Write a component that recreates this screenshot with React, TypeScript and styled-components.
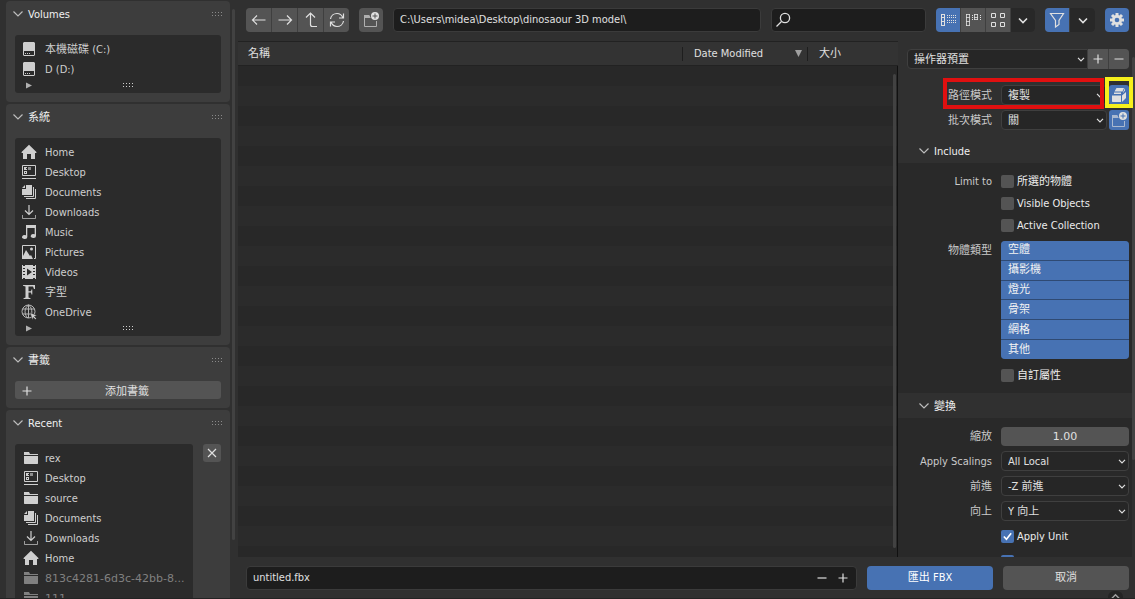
import React, { useState } from "react";
import styled, { createGlobalStyle, css } from "styled-components";

const color = {
  window: "#303030",
  panel: "#3d3d3d",
  well: "#2b2b2b",
  body: "#292929",
  field: "#1d1d1d",
  button: "#545454",
  blue: "#4772b3",
  line: "#3f3f3f",
  text: "#e0e0e0",
};

const GlobalStyle = createGlobalStyle`
  * { box-sizing: border-box; }
  html, body, #root { height: 100%; }
  body {
    margin: 0;
    overflow: hidden;
    background: ${color.window};
    color: ${color.text};
    font: 11px/20px "DejaVu Sans Condensed", "DejaVu Sans", "Noto Sans CJK TC", sans-serif;
  }
  button, input, select {
    font: inherit;
    color: inherit;
    margin: 0;
    padding: 0;
    border: 0;
    background: none;
    border-radius: 0;
    appearance: none;
    outline: none;
  }
  svg { display: block; flex: none; }
`;

/* ---------- icons ---------- */

type IconName =
  | "disk" | "home" | "desktop" | "documents" | "downloads" | "music" | "pictures"
  | "videos" | "font" | "globe" | "folder" | "left" | "right" | "up" | "refresh"
  | "newFolder" | "search" | "listV" | "listH" | "thumbs" | "chevron" | "funnel"
  | "gear" | "plus" | "minus" | "close" | "pack" | "disclose" | "play" | "check" | "raise";

const line = { fill: "none", stroke: "currentColor", strokeWidth: 1 };

const shapes: Record<IconName, React.ReactNode> = {
  disk: (
    <path fill="currentColor" fillRule="evenodd" d="M3 1h10l1 1v12l-1 1H3l-1-1V2zM3 10v4h10v-4zM4 12h1v1H4zM6 12h1v1H6zM8 12h1v1H8z" />
  ),
  home: <path fill="currentColor" d="M8 .8 15.400 8v1H14v6h-4v-5H6v5H2V9H.6V8z" />,
  desktop: (
    <>
      <path {...line} d="M1.500 1.500h13v10h-13zM1 14.500h14" />
      <path fill="currentColor" fillRule="evenodd" d="M3 3h3v3H3zM5 4v1h1V4zM3 7h3v3H3zM4 8v1h1V8z" />
      <path fill="currentColor" opacity=".6" d="M7 3h3v3H7z" />
    </>
  ),
  documents: (
    <>
      <path fill="currentColor" d="M5 1h6v10H1V5h4zM4 1v3H1z" />
      <path {...line} d="M3 12.500h9.500V3M5 14.500h9.500V5" />
    </>
  ),
  downloads: (
    <>
      <path {...line} d="M8 1v9.500M4 6.500l4 4 4-4" strokeWidth={1.2} />
      <path {...line} opacity=".7" d="M1.500 11v3.500h13V11" />
    </>
  ),
  music: (
    <path fill="currentColor" d="M5 1h10v11a2.600 2 0 1 1-1.300-1.700V4H6.300v9A2.600 2 0 1 1 5 11.300z" />
  ),
  pictures: (
    <>
      <path {...line} d="M1.500 14V1.500h13v13H13" />
      <path fill="currentColor" d="M1 15v-1l4-8 4 6 1-1 2 4z" />
      <circle cx="10.500" cy="5" r="1.500" fill="currentColor" />
    </>
  ),
  videos: (
    <path fill="currentColor" fillRule="evenodd" d="M1 1h1v1h2V1h8v1h2V1h1v14h-1v-1h-2v1H4v-1H2v1H1zM2 4v1h2V4zM2 7v1h2V7zM2 10v1h2v-1zM12 4v1h2V4zM12 7v1h2V7zM12 10v1h2v-1zM6 4.500v7L11 8z" />
  ),
  font: (
    <path fill="currentColor" d="M2 1h12v4h-1l-1-2.600H7.500v4.800H10L10.500 5.500h.8v5h-.8L10 8.500H7.500v5l2 .7v.8H2.500v-.8l2-.7v-11L2 1.800z" />
  ),
  globe: (
    <>
      <g {...line} opacity=".85">
        <circle cx="7.500" cy="7.500" r="6.500" />
        <path d="M1.500 5h12M1.500 10h9M7.500 1v13M7.500 1C3 4 3 11 7 14M7.500 1c3 2 3.500 5 3.300 8" />
      </g>
      <path fill="currentColor" stroke={color.well} strokeWidth=".5" d="m9 8.500 7 3-2.600.9 2 2-1.100 1.100-2-2-.9 2.500z" />
    </>
  ),
  folder: <path fill="currentColor" d="M1 2h5l1 2h8v1H1zM1 6h14v7.500l-.5.500h-13l-.5-.500z" />,
  left: <path {...line} strokeWidth="1.200" d="M14.500 8h-13M6 3.500 1.500 8 6 12.500" />,
  right: <path {...line} strokeWidth="1.200" d="M1.500 8h13M10 3.500 14.500 8 10 12.500" />,
  up: <path {...line} strokeWidth="1.200" d="M3 5.500 7.500 1 12 5.500M7.500 1v11.500q0 2 2 2H14" />,
  refresh: (
    <path {...line} strokeWidth="1.200" d="M1.500 7C2 3.500 5 1.500 8 1.500c3 0 5 2 6 4.500M14.500 1.500V6H10M14.500 9c-.5 3.500-3.500 5.500-6.500 5.500-3 0-5-2-6-4.500M1.500 14.500V10H6" />
  ),
  newFolder: (
    <>
      <g opacity=".65">
        <path {...line} d="M7.500 5.500h-6v9h12V9" />
        <path fill="currentColor" d="M1 3h5l1 1v2H1z" />
      </g>
      <path fill="currentColor" fillRule="evenodd" d="M12 0a4 4 0 0 1 0 8 4 4 0 0 1 0-8zM11.500 1.500v2h-2v1h2v2h1v-2h2v-1h-2v-2z" />
    </>
  ),
  search: (
    <g {...line} strokeWidth="1.300">
      <circle cx="10" cy="6" r="4.600" />
      <path d="M6.500 9.500 1.500 14.500" />
    </g>
  ),
  listV: (
    <>
      <path {...line} d="M1.500 2v12M4.500 2v12M1 2.500h4M1 5.500h4M1 9.500h4M1 13.500h4" />
      <path {...line} strokeDasharray="1 1" d="M7 3.500h9M7 5.500h9M7 8.500h9M7 10.500h9" />
    </>
  ),
  listH: (
    <>
      <path {...line} d="M1.500 2v12M4.500 2v12M1 2.500h4M1 5.500h4M1 9.500h4M1 13.500h4M9.500 2v6M12.500 2v6M9 2.500h4M9 5.500h4M9 7.500h4" opacity=".8" />
      <path {...line} strokeDasharray="1 1" d="M7.500 3v5M15.500 3v5" />
    </>
  ),
  thumbs: <path {...line} d="M1.500 1.500h4v4h-4zM10.500 1.500h4v4h-4zM1.500 10.500h4v4h-4zM10.500 10.500h4v4h-4z" />,
  chevron: <path {...line} strokeWidth="1.600" d="m4 6.500 4 4 4-4" />,
  funnel: <path {...line} strokeWidth="1.200" d="M1.500 1.500h13L10 8.500v4L6.500 15V8.500z" />,
  gear: (
    <>
      <path stroke="currentColor" strokeWidth="3" d="M8 1v14M1 8h14M3 3l10 10M13 3 3 13" />
      <circle cx="8" cy="8" r="5" fill="currentColor" />
      <circle cx="8" cy="8" r="2.300" fill={color.blue} />
    </>
  ),
  plus: <path {...line} strokeWidth="1.200" d="M8 3.500v9M3.500 8h9" />,
  minus: <path {...line} strokeWidth="1.200" d="M3.500 8h9" />,
  close: <path {...line} strokeWidth="1.200" d="m4 4 8 8M12 4l-8 8" />,
  pack: (
    <>
      <path fill="currentColor" d="M5.500 1H13l-1.500 3.500h-8zM3 5.500h7V7H3zM1 8.500h9V15H1.500L1 14.500z" />
      <path fill="currentColor" d="M11 8.500 15 5v6l-4 4zM12 5.500 14 1v2.500L12 6z" />
    </>
  ),
  disclose: <path {...line} strokeWidth="1.200" d="m3.500 5.500 4.500 4.500L12.500 5.500" />,
  play: <path fill="currentColor" d="M4 4.500 12 8.500 4 12.500z" />,
  check: <path {...line} strokeWidth="2" d="m3.500 8 3.200 3.500L12.500 4" />,
  raise: <path {...line} strokeWidth="1.500" d="m4 8 4-4 4 4" />,
};

const Icon = ({ name, size = 16 }: { name: IconName; size?: number }) => (
  <svg width={size} height={size} viewBox="0 0 16 16" aria-hidden="true">
    {shapes[name]}
  </svg>
);

/* ---------- shared controls ---------- */

/* The typeface sits high in its line box; captions beside icons are lowered a little. */
const Caption = styled.span`
  padding-top: 2px;
`;

const Button = styled.button<{ $tone?: "blue" | "dark"; $w?: number }>`
  display: flex;
  align-items: center;
  justify-content: center;
  flex: none;
  width: ${(p) => p.$w ?? 24}px;
  background: ${(p) => (p.$tone === "blue" ? color.blue : p.$tone === "dark" ? "#282828" : color.button)};
  border-radius: 3px;
`;

const Group = styled.div<{ $h?: number }>`
  display: flex;
  flex: none;
  gap: 1px;
  height: ${(p) => p.$h ?? 24}px;
  background: ${color.line};
  border-radius: 4px;
  overflow: hidden;
  ${Button} { border-radius: 0; }
`;

const TextField = styled.div<{ $pad?: number }>`
  display: flex;
  align-items: center;
  min-width: 0;
  height: 24px;
  padding: 0 3px 0 ${(p) => p.$pad ?? 6}px;
  background: ${color.field};
  border: 1px solid #3b3b3b;
  border-radius: 4px;
  input { flex: 1; min-width: 0; }
`;

const SelectBox = styled.div`
  flex: 1;
  min-width: 0;
  display: grid;
  align-items: center;
  height: 20px;
  background: #262626;
  border: 1px solid ${color.line};
  border-radius: 4px;
  select, svg { grid-area: 1 / 1; }
  select { width: 100%; height: 18px; padding: 1px 18px 0 6px; line-height: 17px; }
  svg { justify-self: end; pointer-events: none; }
`;

const Select = ({ id, label, value }: { id?: string; label?: string; value: string }) => (
  <SelectBox>
    <select id={id} aria-label={label} defaultValue={value}>
      <option>{value}</option>
    </select>
    <Icon name="chevron" size={12} />
  </SelectBox>
);

const Grip = styled.span<{ $bright?: boolean }>`
  width: 11px;
  height: 5px;
  background: repeating-linear-gradient(90deg, ${(p) => (p.$bright ? "#d0d0d0" : "#8a8a8a")} 0 1px, transparent 1px 3px);
  mask: linear-gradient(#000 1px, transparent 1px 3px, #000 3px 4px, transparent 4px);
`;

/* ---------- sidebar ---------- */

const Shell = styled.div`
  display: grid;
  grid-template-columns: 238px minmax(0, 1fr);
  height: 100vh;
  border-bottom: 1px solid #232323;
`;

const Sidebar = styled.nav`
  display: flex;
  gap: 2px;
  min-height: 0;
  padding: 1px 3px 0 6px;
  overflow: hidden;
`;

const PanelStack = styled.div`
  flex: 1;
  display: flex;
  flex-direction: column;
  gap: 2px;
  min-width: 0;
`;

const Panel = styled.section`
  flex: none;
  padding: 0 9px 9px;
  background: ${color.panel};
  border-radius: 4px;
`;

const PanelHeader = styled.h2`
  display: flex;
  align-items: center;
  gap: 2px;
  height: 26px;
  margin: 0 -2px 8px -5px;
  font-size: 11px;
  font-weight: 400;
  color: #f0f0f0;
  svg { color: #bdbdbd; }
  ${Grip} { margin-left: auto; }
`;

const Well = styled.div`
  flex: 1;
  min-width: 0;
  padding-top: 4px;
  background: ${color.well};
  border-radius: 3px;
`;

const List = styled.ul<{ $indent?: number }>`
  margin: 0;
  padding: 0 10px 0 ${(p) => p.$indent ?? 6}px;
  list-style: none;
`;

const Entry = styled.button<{ $dim?: boolean; $gap: number }>`
  display: flex;
  align-items: center;
  gap: ${(p) => p.$gap}px;
  width: 100%;
  height: 20px;
  color: #cfcfcf;
  white-space: nowrap;
  ${(p) => p.$dim && css`
    color: #808080;
    font-family: "DejaVu Sans", sans-serif;
  `}
`;

const WellFooter = styled.div`
  display: grid;
  grid-template-columns: 12px 1fr;
  align-items: center;
  justify-items: center;
  height: 14px;
  padding: 0 0 4px 8px;
  color: #b0b0b0;
`;

const WideButton = styled.button`
  display: grid;
  grid-template-columns: 16px 1fr;
  align-items: center;
  width: 100%;
  height: 18px;
  padding: 0 2px 0 4px;
  line-height: 18px;
  background: ${color.button};
  border-radius: 3px;
`;

const RecentRow = styled.div`
  display: flex;
  align-items: flex-start;
  gap: 10px;
  ${Button} { height: 18px; }
`;

const Scroll = styled.div<{ $h: string }>`
  flex: none;
  width: 3px;
  height: ${(p) => p.$h};
  margin-top: 8px;
  background: #424242;
  border-radius: 2px;
`;

type Item = { icon: IconName; name: string; dim?: boolean };

const volumes: Item[] = [
  { icon: "disk", name: "本機磁碟 (C:)" },
  { icon: "disk", name: "D (D:)" },
];
const system: Item[] = [
  { icon: "home", name: "Home" },
  { icon: "desktop", name: "Desktop" },
  { icon: "documents", name: "Documents" },
  { icon: "downloads", name: "Downloads" },
  { icon: "music", name: "Music" },
  { icon: "pictures", name: "Pictures" },
  { icon: "videos", name: "Videos" },
  { icon: "font", name: "字型" },
  { icon: "globe", name: "OneDrive" },
];
const recent: Item[] = [
  { icon: "folder", name: "rex" },
  { icon: "desktop", name: "Desktop" },
  { icon: "folder", name: "source" },
  { icon: "documents", name: "Documents" },
  { icon: "downloads", name: "Downloads" },
  { icon: "home", name: "Home" },
  { icon: "folder", name: "813c4281-6d3c-42bb-8...", dim: true },
  { icon: "folder", name: "111", dim: true },
];

const Entries = ({ items, indent = 6 }: { items: Item[]; indent?: number }) => (
  <List $indent={indent}>
    {items.map((it) => (
      <li key={it.name}>
        <Entry type="button" $dim={it.dim} $gap={14 - indent}>
          <Icon name={it.icon} />
          <Caption>{it.name}</Caption>
        </Entry>
      </li>
    ))}
  </List>
);

const SidePanel = ({ title, children }: { title: string; children: React.ReactNode }) => (
  <Panel>
    <PanelHeader>
      <Icon name="disclose" />
      <Caption>{title}</Caption>
      <Grip />
    </PanelHeader>
    {children}
  </Panel>
);

const Footer = () => (
  <WellFooter>
    <Icon name="play" size={12} />
    <Grip $bright />
  </WellFooter>
);

/* ---------- main area ---------- */

const Main = styled.main`
  display: grid;
  grid-template-rows: 41px minmax(0, 1fr) 41px;
  min-width: 0;
  min-height: 0;
`;

const Toolbar = styled.header`
  display: flex;
  align-items: flex-start;
  gap: 10px;
  padding: 8px 6px 0 8px;
`;

const Grow = styled.div<{ $share: number }>`
  flex: ${(p) => p.$share} 1 0;
  min-width: 0;
`;

const Middle = styled.div`
  display: grid;
  grid-template-columns: minmax(0, 1fr) 237px;
  min-height: 0;
`;

const Files = styled.section`
  display: flex;
  flex-direction: column;
  min-height: 0;
  border-top: 1px solid #222;
`;

const FileTable = styled.table`
  width: 100%;
  table-layout: fixed;
  border-collapse: collapse;
  background: #333;
  th {
    height: 23px;
    padding: 1px 0 0 10px;
    text-align: left;
    font-weight: 400;
    line-height: 14px;
    border-bottom: 1px solid #222;
  }
`;

const HeadCell = styled.div`
  display: flex;
  align-items: center;
  justify-content: space-between;
  height: 14px;
  margin-left: -10px;
  padding: 0 5px 0 11px;
  border-left: 1px solid #1e1e1e;
  svg { color: #a0a0a0; }
`;

const Stripes = styled.div`
  flex: 1;
  display: flex;
  justify-content: flex-end;
  padding: 0 1px 9px 0;
  border-right: 1px solid #111;
  background: repeating-linear-gradient(#282828 0 20px, #2b2b2b 20px 40px);
`;

const Options = styled.aside`
  display: flex;
  min-height: 0;
  overflow: hidden;
  padding-top: 8px;
`;

const OptionScroll = styled.div`
  flex: 1;
  min-width: 0;
  min-height: 0;
`;

const PresetRow = styled.div`
  display: flex;
  padding: 0 3px 0 9px;
  ${SelectBox} { border-radius: 4px 0 0 4px; }
  ${Group} { border-radius: 0 4px 4px 0; }
`;

const Modes = styled.div`
  position: relative;
  display: grid;
  gap: 5px;
  padding: 16px 3px 8px 0;
`;

const Row = styled.div`
  display: flex;
  align-items: center;
  gap: 9px;
  height: 20px;
`;

const RowLabel = styled.label`
  flex: none;
  width: 94px;
  padding-top: 2px;
  text-align: right;
  color: #cacaca;
  white-space: nowrap;
`;

const Field = styled.div`
  flex: 1;
  min-width: 0;
  display: flex;
  gap: 2px;
  ${Button} { height: 20px; }
`;

const SectionHead = styled.h2`
  display: flex;
  align-items: center;
  gap: 2px;
  height: 25px;
  margin: 0;
  padding-left: 18px;
  font-size: 11px;
  font-weight: 400;
  color: #f0f0f0;
  svg { color: #bdbdbd; }
`;

const SectionBody = styled.div<{ $gap: number; $pad: string }>`
  display: grid;
  gap: ${(p) => p.$gap}px;
  padding: ${(p) => p.$pad};
  background: ${color.body};
`;

const TypeList = styled.div`
  flex: 1;
  display: grid;
  gap: 1px;
  height: 118px;
  background: #2f4a73;
  border-radius: 4px;
  overflow: hidden;
`;

const TypeButton = styled.button`
  padding-left: 7px;
  line-height: 18px;
  text-align: left;
  color: #f4f4f4;
  background: ${color.blue};
`;

const TallRow = styled.div`
  display: flex;
  align-items: flex-start;
  gap: 9px;
  ${RowLabel} { padding-top: 0; }
`;

const NumberInput = styled.input`
  width: 100%;
  height: 19px;
  padding-top: 1px;
  text-align: center;
  font-family: "DejaVu Sans", sans-serif;
  background: ${color.button};
  border-radius: 4px;
`;

const CheckLabel = styled.label`
  display: flex;
  align-items: center;
  gap: 3px;
  color: #ececec;
  white-space: nowrap;
`;

const CheckBox = styled.span`
  display: grid;
  place-items: center;
  width: 13px;
  height: 13px;
  input, svg { grid-area: 1 / 1; }
  input { width: 13px; height: 13px; border-radius: 2px; background: ${color.button}; }
  input:checked { background: ${color.blue}; }
  svg { visibility: hidden; pointer-events: none; color: #fff; }
  input:checked + svg { visibility: visible; }
`;

const Check = ({ text, checked = false }: { text: string; checked?: boolean }) => (
  <CheckLabel>
    <CheckBox>
      <input type="checkbox" defaultChecked={checked} />
      <Icon name="check" size={13} />
    </CheckBox>
    <Caption>{text}</Caption>
  </CheckLabel>
);

const Marker = styled.div<{ $color: string }>`
  position: absolute;
  pointer-events: none;
  border: 4px solid ${(p) => p.$color};
`;

const RedMarker = styled(Marker)`
  top: 9px;
  right: 28px;
  width: 161px;
  height: 31px;
`;

const YellowMarker = styled(Marker)`
  top: 8px;
  right: -1px;
  width: 28px;
  height: 31px;
`;

const BottomBar = styled.footer`
  position: relative;
  display: flex;
  gap: 10px;
  padding: 9px 6px 0 8px;
  ${TextField} { flex: 1; }
`;

const StepButton = styled.button`
  width: 21px;
  height: 20px;
  display: grid;
  place-items: center;
`;

const Action = styled.button<{ $primary?: boolean }>`
  width: 126px;
  height: 24px;
  color: ${(p) => (p.$primary ? "#fff" : color.text)};
  background: ${(p) => (p.$primary ? color.blue : color.button)};
  border-radius: 4px;
`;

const CornerTab = styled.div`
  position: absolute;
  right: 12px;
  bottom: 0;
  width: 15px;
  height: 7px;
  overflow: hidden;
  color: #a0a0a0;
  background: #242424;
  border-radius: 6px 6px 0 0;
`;

const selectRows = [
  { id: "scalings", label: "Apply Scalings", value: "All Local" },
  { id: "forward", label: "前進", value: "-Z 前進" },
  { id: "upward", label: "向上", value: "Y 向上" },
];

export default function App() {
  const [path, setPath] = useState("C:\\Users\\midea\\Desktop\\dinosaour 3D model\\");
  const [file, setFile] = useState("untitled.fbx");

  return (
    <>
      <GlobalStyle />
      <Shell>
        <Sidebar>
          <PanelStack>
            <SidePanel title="Volumes">
              <Well><Entries items={volumes} /><Footer /></Well>
            </SidePanel>
            <SidePanel title="系統">
              <Well><Entries items={system} /><Footer /></Well>
            </SidePanel>
            <SidePanel title="書籤">
              <WideButton type="button"><Icon name="plus" /><Caption>添加書籤</Caption></WideButton>
            </SidePanel>
            <SidePanel title="Recent">
              <RecentRow>
                <Well><Entries items={recent} indent={8} /></Well>
                <Button type="button" aria-label="Clear recent" $w={18}><Icon name="close" /></Button>
              </RecentRow>
            </SidePanel>
          </PanelStack>
          <Scroll $h="89%" />
        </Sidebar>

        <Main>
          <Toolbar>
            <Group>
              <Button type="button" aria-label="Back" $w={25}><Icon name="left" /></Button>
              <Button type="button" aria-label="Forward" $w={25}><Icon name="right" /></Button>
              <Button type="button" aria-label="Parent" $w={25}><Icon name="up" /></Button>
              <Button type="button" aria-label="Refresh" $w={25}><Icon name="refresh" /></Button>
            </Group>
            <Group><Button type="button" aria-label="New folder"><Icon name="newFolder" /></Button></Group>
            <Grow $share={26}>
              <TextField>
                <input aria-label="Path" value={path} onChange={(e) => setPath(e.target.value)} />
              </TextField>
            </Grow>
            <Grow $share={11}>
              <TextField $pad={3}>
                <Icon name="search" />
                <input type="search" aria-label="Search" />
              </TextField>
            </Grow>
            <Group>
              <Button type="button" aria-label="Vertical list" $tone="blue"><Icon name="listV" /></Button>
              <Button type="button" aria-label="Horizontal list"><Icon name="listH" /></Button>
              <Button type="button" aria-label="Thumbnails"><Icon name="thumbs" /></Button>
              <Button type="button" aria-label="Display settings" $tone="dark"><Icon name="chevron" /></Button>
            </Group>
            <Group>
              <Button type="button" aria-label="Filter" $tone="blue"><Icon name="funnel" /></Button>
              <Button type="button" aria-label="Filter settings" $tone="dark" $w={25}><Icon name="chevron" /></Button>
            </Group>
            <Group><Button type="button" aria-label="Options" $tone="blue"><Icon name="gear" /></Button></Group>
          </Toolbar>

          <Middle>
            <Files>
              <FileTable>
                <colgroup><col /><col width="125" /><col width="91" /></colgroup>
                <thead>
                  <tr>
                    <th>名稱</th>
                    <th><HeadCell>Date Modified<svg width="7" height="7" viewBox="0 0 7 7"><path fill="currentColor" d="M0 0h7L3.500 7z" /></svg></HeadCell></th>
                    <th><HeadCell>大小</HeadCell></th>
                  </tr>
                </thead>
              </FileTable>
              <Stripes><Scroll $h="auto" /></Stripes>
            </Files>

            <Options>
              <OptionScroll>
                <PresetRow>
                  <Select label="操作器預置" value="操作器預置" />
                  <Group $h={20}>
                    <Button type="button" aria-label="Add preset" $w={20}><Icon name="plus" /></Button>
                    <Button type="button" aria-label="Remove preset" $w={20}><Icon name="minus" /></Button>
                  </Group>
                </PresetRow>

                <Modes>
                  <Row>
                    <RowLabel htmlFor="path-mode">路徑模式</RowLabel>
                    <Field>
                      <Select id="path-mode" value="複製" />
                      <Button type="button" aria-label="Embed textures" $tone="blue" $w={20}><Icon name="pack" /></Button>
                    </Field>
                  </Row>
                  <Row>
                    <RowLabel htmlFor="batch-mode">批次模式</RowLabel>
                    <Field>
                      <Select id="batch-mode" value="關" />
                      <Button type="button" aria-label="Batch own directory" $tone="blue" $w={20}><Icon name="newFolder" /></Button>
                    </Field>
                  </Row>
                  <RedMarker $color="#e01010" />
                  <YellowMarker $color="#f7f01c" />
                </Modes>

                <SectionHead><Icon name="disclose" /><Caption>Include</Caption></SectionHead>
                <SectionBody $gap={2} $pad="8px 3px 8px 0">
                  <Row><RowLabel as="span">Limit to</RowLabel><Check text="所選的物體" /></Row>
                  <Row><RowLabel as="span" /><Check text="Visible Objects" /></Row>
                  <Row><RowLabel as="span" /><Check text="Active Collection" /></Row>
                  <SectionBody $gap={6} $pad="4px 0 0 0">
                    <TallRow>
                      <RowLabel as="span">物體類型</RowLabel>
                      <TypeList>
                        {["空體", "攝影機", "燈光", "骨架", "網格", "其他"].map((t) => (
                          <TypeButton type="button" key={t}>{t}</TypeButton>
                        ))}
                      </TypeList>
                    </TallRow>
                    <Row><RowLabel as="span" /><Check text="自訂屬性" /></Row>
                  </SectionBody>
                </SectionBody>

                <SectionHead><Icon name="disclose" /><Caption>變換</Caption></SectionHead>
                <SectionBody $gap={5} $pad="8px 3px 8px 0">
                  <Row>
                    <RowLabel htmlFor="scale">縮放</RowLabel>
                    <Field><NumberInput id="scale" defaultValue="1.00" /></Field>
                  </Row>
                  {selectRows.map((r) => (
                    <Row key={r.id}>
                      <RowLabel htmlFor={r.id}>{r.label}</RowLabel>
                      <Field><Select id={r.id} value={r.value} /></Field>
                    </Row>
                  ))}
                  <Row><RowLabel as="span" /><Check text="Apply Unit" checked /></Row>
                  <Row><RowLabel as="span" /><Check text="Use Space Transform" checked /></Row>
                </SectionBody>
              </OptionScroll>
              <Scroll $h="403px" />
            </Options>
          </Middle>

          <BottomBar>
            <TextField>
              <input aria-label="File name" value={file} onChange={(e) => setFile(e.target.value)} />
              <StepButton type="button" aria-label="Decrease number"><Icon name="minus" /></StepButton>
              <StepButton type="button" aria-label="Increase number"><Icon name="plus" /></StepButton>
            </TextField>
            <Action type="button" $primary>匯出 FBX</Action>
            <Action type="button">取消</Action>
            <CornerTab><Icon name="raise" size={15} /></CornerTab>
          </BottomBar>
        </Main>
      </Shell>
    </>
  );
}
